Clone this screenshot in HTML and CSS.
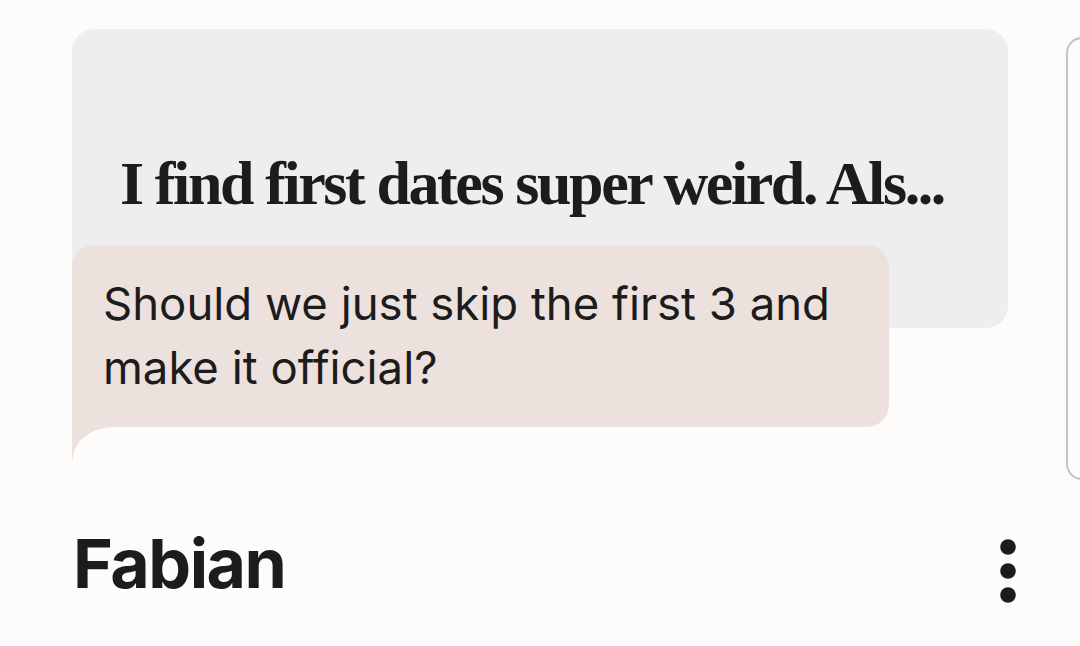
FILE: index.html
```html
<!DOCTYPE html>
<html lang="en">
<head>
<meta charset="utf-8">
<title>Fabian</title>
<link rel="stylesheet" href="styles.css">
</head>
<body>
<div class="screen">
  <div class="top">
    <div class="chat">
      <div class="prompt-card">
        <p class="prompt-text">I find first dates super weird. Als...</p>
      </div>
      <div class="reply">
        <p class="reply-text">Should we just skip the first 3 and make it official?</p>
      </div>
    </div>
    <div class="side-card"></div>
  </div>
  <div class="footer">
    <h1 class="name">Fabian</h1>
    <button class="more" aria-label="More options">
      <svg width="18" height="66" viewBox="0 0 18 66">
        <circle cx="9" cy="9" r="7.8" fill="#1c1c1c"/>
        <circle cx="9" cy="33" r="7.8" fill="#1c1c1c"/>
        <circle cx="9" cy="57" r="7.8" fill="#1c1c1c"/>
      </svg>
    </button>
  </div>
</div>
</body>
</html>
```
FILE: styles.css
```css
html, body {
  margin: 0;
  padding: 0;
  background: #fdfcfb;
}
body {
  width: 1080px;
  height: 646px;
  overflow: hidden;
  color: #1c1c1c;
}
.screen {
  display: flex;
  flex-direction: column;
  width: 1080px;
  overflow: hidden;
}
.top {
  display: flex;
  align-items: flex-start;
  gap: 58px;
  padding: 29px 0 0 72px;
}
.chat {
  width: 936px;
  flex: none;
}
.prompt-card {
  height: 299px;
  box-sizing: border-box;
  background: #eeeeef;
  border-radius: 22px;
  padding: 121px 0 0 48px;
}
.prompt-text {
  margin: 0;
  font-family: "Liberation Serif", "Times New Roman", serif;
  font-weight: 700;
  font-size: 62px;
  line-height: 66px;
  letter-spacing: -2.4px;
  white-space: nowrap;
}
.reply {
  position: relative;
  width: 817px;
  height: 182px;
  box-sizing: border-box;
  margin-top: -83px;
  background: #ede1de;
  border-radius: 22px 22px 22px 0;
  padding: 27px 40px 0 31px;
}
.reply::after {
  content: "";
  position: absolute;
  left: 0;
  top: 100%;
  width: 40px;
  height: 35px;
  background: radial-gradient(ellipse 40px 35px at 100% 100%, transparent 98%, #ede1de 100%);
}
.reply-text {
  margin: 0;
  font-family: "Inter", "Noto Sans", sans-serif;
  font-weight: 400;
  font-size: 45.5px;
  line-height: 64px;
}
.side-card {
  flex: none;
  width: 80px;
  height: 443px;
  margin-top: 8px;
  box-sizing: border-box;
  border: 2px solid #c4c4c4;
  border-radius: 16px;
  background: #fdfcfb;
}
.footer {
  display: flex;
  align-items: flex-start;
  justify-content: space-between;
  padding: 51px 63px 0 73px;
}
.name {
  margin: 0;
  font-family: "Inter", "Noto Sans", sans-serif;
  font-weight: 700;
  font-size: 68px;
  line-height: 64px;
  letter-spacing: -1.5px;
}
.more {
  border: 0;
  background: none;
  padding: 0;
  margin-top: 7px;
  display: flex;
}
```
